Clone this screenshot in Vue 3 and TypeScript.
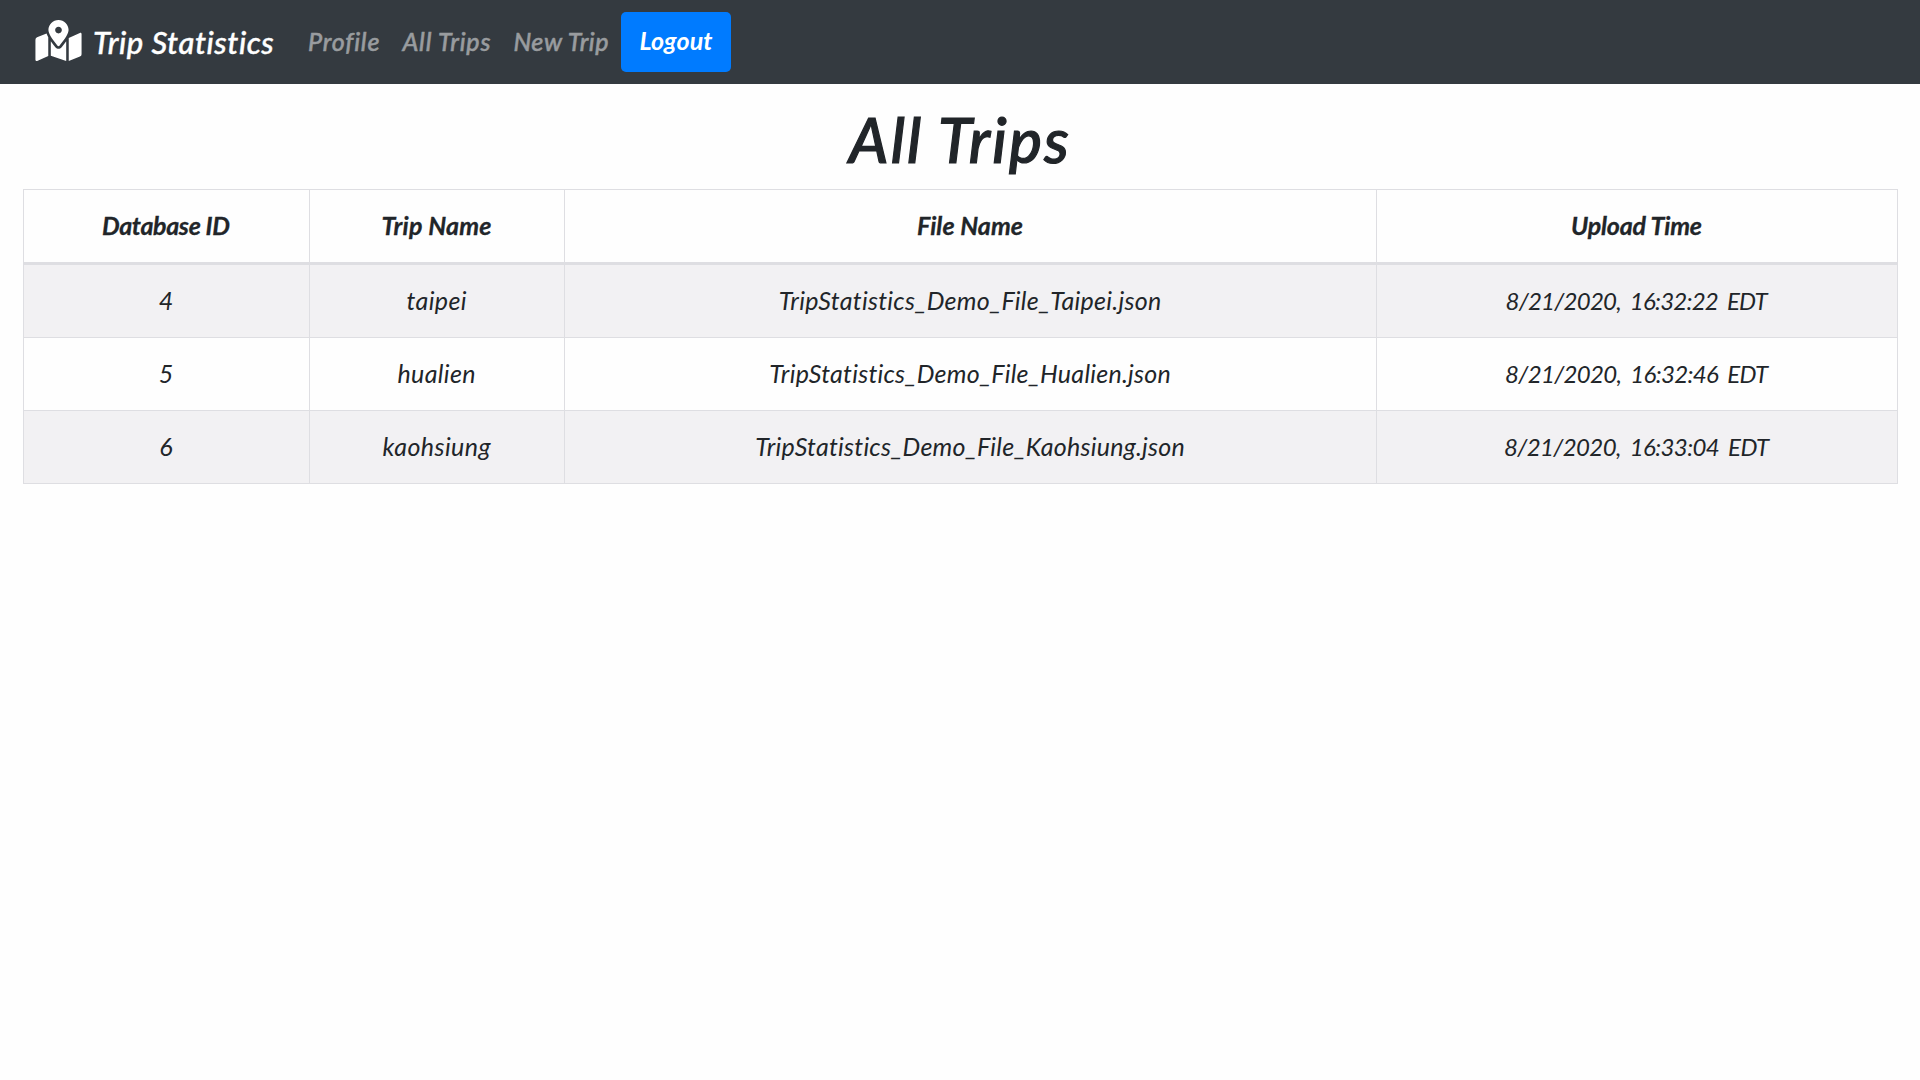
<script setup lang="ts">
import type { Directive } from 'vue'

interface Label {
  text: string
  width: number
}

interface Trip {
  id: Label
  name: Label
  file: Label
  uploaded: Label
}

const links: Label[] = [
  { text: 'Profile', width: 71 },
  { text: 'All Trips', width: 88 },
  { text: 'New Trip', width: 95 },
]

const columns: Label[] = [
  { text: 'Database ID', width: 128 },
  { text: 'Trip Name', width: 110 },
  { text: 'File Name', width: 106 },
  { text: 'Upload Time', width: 131 },
]

const trips: Trip[] = [
  {
    id: { text: '4', width: 12 },
    name: { text: 'taipei', width: 60 },
    file: { text: 'TripStatistics_Demo_File_Taipei.json', width: 382 },
    uploaded: { text: '8/21/2020, 16:32:22 EDT', width: 262 },
  },
  {
    id: { text: '5', width: 13 },
    name: { text: 'hualien', width: 78 },
    file: { text: 'TripStatistics_Demo_File_Hualien.json', width: 401 },
    uploaded: { text: '8/21/2020, 16:32:46 EDT', width: 263 },
  },
  {
    id: { text: '6', width: 13 },
    name: { text: 'kaohsiung', width: 108 },
    file: { text: 'TripStatistics_Demo_File_Kaohsiung.json', width: 429 },
    uploaded: { text: '8/21/2020, 16:33:04 EDT', width: 265 },
  },
]

// Tracks a label out or in so that it takes up the given width.
const vFit: Directive<HTMLElement, number> = {
  mounted(el, { value }) {
    const count = (el.textContent ?? '').length
    const natural = el.getBoundingClientRect().width
    if (count < 2) return
    const spacing = (value - natural) / (count - 1)
    el.style.letterSpacing = `${spacing}px`
    el.style.marginRight = `${-spacing}px`
  },
}
</script>

<template>
  <nav class="navbar">
    <a class="brand">
      <svg class="logo" viewBox="0 0 576 512" fill="currentColor">
        <path d="M288 0c-69.59 0-126 56.41-126 126 0 56.26 82.35 158.8 113.9 196.02 6.39 7.54 17.82 7.54 24.2 0C331.65 284.8 414 182.26 414 126 414 56.41 357.59 0 288 0zm0 168c-23.2 0-42-18.8-42-42s18.8-42 42-42 42 18.8 42 42-18.8 42-42 42zM20.12 215.95A32.006 32.006 0 0 0 0 245.66v250.32c0 11.32 11.43 19.06 21.94 14.86L160 448V214.92c-8.84-15.98-16.07-31.54-21.25-46.42L20.12 215.95zM288 359.67c-14.07 0-27.38-6.18-36.51-16.96-19.66-23.2-40.57-49.62-59.49-76.72v182l192 64V266c-18.92 27.09-39.82 53.52-59.49 76.72-9.13 10.77-22.44 16.95-36.51 16.95zm266.06-198.51L416 224v288l139.88-55.95A31.996 31.996 0 0 0 576 426.34V176.02c0-11.32-11.43-19.06-21.94-14.86z" />
      </svg>
      <span v-fit="180" class="label">Trip Statistics</span>
    </a>
    <div class="links">
      <a v-for="link in links" :key="link.text" class="link">
        <span v-fit="link.width" class="label">{{ link.text }}</span>
      </a>
    </div>
    <button class="logout"><span v-fit="73" class="label">Logout</span></button>
  </nav>

  <main class="page">
    <h1 class="title"><span v-fit="220" class="label">All Trips</span></h1>
    <table class="trips">
      <colgroup>
        <col class="col-id" />
        <col class="col-name" />
        <col class="col-file" />
        <col class="col-time" />
      </colgroup>
      <thead>
        <tr>
          <th v-for="column in columns" :key="column.text">
            <span v-fit="column.width" class="label">{{ column.text }}</span>
          </th>
        </tr>
      </thead>
      <tbody>
        <tr v-for="trip in trips" :key="trip.id.text">
          <td><span v-fit="trip.id.width" class="label">{{ trip.id.text }}</span></td>
          <td><span v-fit="trip.name.width" class="label">{{ trip.name.text }}</span></td>
          <td><span v-fit="trip.file.width" class="label">{{ trip.file.text }}</span></td>
          <td><span v-fit="trip.uploaded.width" class="label time">{{ trip.uploaded.text }}</span></td>
        </tr>
      </tbody>
    </table>
  </main>
</template>

<style>
body {
  margin: 0;
  background: #fefefe;
  color: #212529;
  font-family: Lato, 'Open Sans', sans-serif;
  font-style: italic;
  font-size: 25px;
}
</style>

<style scoped>
.navbar {
  display: flex;
  align-items: center;
  box-sizing: border-box;
  height: 84px;
  padding-left: 35px;
  background: #343a40;
}

.label {
  display: inline-block;
  white-space: nowrap;
}

.brand {
  display: flex;
  align-items: center;
  gap: 11px;
  width: 273px;
  color: #fff;
  font-size: 31px;
  font-weight: 500;
  line-height: 40px;
  -webkit-text-stroke: 0.4px currentColor;
}

.logo {
  width: 47px;
  height: 41px;
  margin-bottom: 3px;
}

.links {
  display: flex;
  gap: 23px;
  width: 313px;
  padding-bottom: 2px;
  color: #999c9f;
  font-weight: 500;
  -webkit-text-stroke: 0.5px currentColor;
}

.link {
  display: block;
  line-height: 34px;
}

.logout {
  width: 110px;
  height: 60px;
  padding: 0 0 4px;
  border: 0;
  border-radius: 5px;
  background: #007bff;
  color: #fff;
  font: inherit;
  font-weight: 700;
}

.page {
  padding: 0 22px 0 23px;
}

.title {
  margin: 0;
  height: 105px;
  padding-right: 3px;
  font-size: 62px;
  font-weight: 500;
  line-height: 110px;
  text-align: center;
  -webkit-text-stroke: 1.2px currentColor;
}

.trips {
  width: 1874px;
  table-layout: fixed;
  border-collapse: collapse;
  text-align: center;
}

.col-id {
  width: 286px;
}

.col-name {
  width: 255px;
}

.col-file {
  width: 812px;
}

.col-time {
  width: 521px;
}

th,
td {
  box-sizing: border-box;
  height: 73px;
  padding: 0 1px 2px 0;
  border: 1px solid #dedee2;
  line-height: 32px;
}

th {
  height: 74px;
  border-bottom-width: 3px;
  font-weight: 700;
  -webkit-text-stroke: 0.3px currentColor;
}

tbody tr:first-child td {
  height: 74px;
}

tbody tr:nth-child(odd) {
  background: #f2f1f3;
}

.time {
  font-size: 24px;
  word-spacing: 4px;
}
</style>
